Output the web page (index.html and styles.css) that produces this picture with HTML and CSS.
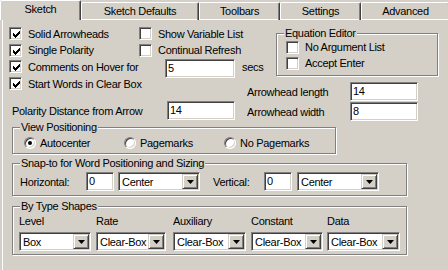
FILE: index.html
```html
<!DOCTYPE html>
<html>
<head>
<meta charset="utf-8">
<title>Sketch options</title>
<link rel="stylesheet" href="styles.css">
</head>
<body>
<div class="tabs">
  <div class="tab sel t1">Sketch</div>
  <div class="tab t2">Sketch Defaults</div>
  <div class="tab t3">Toolbars</div>
  <div class="tab t3">Settings</div>
  <div class="tab t5">Advanced</div>
</div>
<div class="panel">
  <div class="rowA">
    <div class="leftA">
      <div class="line">
        <div class="cb w130"><span class="box"><svg class="chk" width="7" height="7" viewBox="0 0 7 7"><path d="M0 2h1v3H0zM1 3h1v3H1zM2 4h1v3H2zM3 3h1v3H3zM4 2h1v3H4zM5 1h1v3H5zM6 0h1v3H6z"/></svg></span>Solid Arrowheads</div>
        <div class="cb"><span class="box"></span>Show Variable List</div>
      </div>
      <div class="line l2">
        <div class="cb w130"><span class="box"><svg class="chk" width="7" height="7" viewBox="0 0 7 7"><path d="M0 2h1v3H0zM1 3h1v3H1zM2 4h1v3H2zM3 3h1v3H3zM4 2h1v3H4zM5 1h1v3H5zM6 0h1v3H6z"/></svg></span>Single Polarity</div>
        <div class="cb"><span class="box"></span>Continual Refresh</div>
      </div>
      <div class="line">
        <div class="cb w156"><span class="box"><svg class="chk" width="7" height="7" viewBox="0 0 7 7"><path d="M0 2h1v3H0zM1 3h1v3H1zM2 4h1v3H2zM3 3h1v3H3zM4 2h1v3H4zM5 1h1v3H5zM6 0h1v3H6z"/></svg></span>Comments on Hover for</div>
        <div class="edit w70 low">5</div>
        <div class="secs">secs</div>
      </div>
    </div>
    <div class="group eq">
      <div class="gtitle">Equation Editor</div>
      <div class="eqrows">
        <div class="line eqline"><div class="cb"><span class="box"></span>No Argument List</div></div>
        <div class="line eqline"><div class="cb"><span class="box"></span>Accept Enter</div></div>
      </div>
    </div>
  </div>
  <div class="rowB">
    <div class="leftB">
      <div class="line">
        <div class="cb"><span class="box"><svg class="chk" width="7" height="7" viewBox="0 0 7 7"><path d="M0 2h1v3H0zM1 3h1v3H1zM2 4h1v3H2zM3 3h1v3H3zM4 2h1v3H4zM5 1h1v3H5zM6 0h1v3H6z"/></svg></span>Start Words in Clear Box</div>
      </div>
      <div class="polar">
        <div class="plbl">Polarity Distance from Arrow</div>
        <div class="edit w68">14</div>
      </div>
    </div>
    <div class="rightB">
      <div class="arow a1"><div class="albl">Arrowhead length</div><div class="edit w68">14</div></div>
      <div class="arow a2"><div class="albl">Arrowhead width</div><div class="edit w68">8</div></div>
    </div>
  </div>

  <div class="group view">
    <div class="gtitle">View Positioning</div>
    <div class="radios">
      <div class="ritem"><span class="radio on"></span>Autocenter</div>
      <div class="ritem"><span class="radio"></span>Pagemarks</div>
      <div class="ritem"><span class="radio"></span>No Pagemarks</div>
    </div>
  </div>

  <div class="group snap">
    <div class="gtitle">Snap-to for Word Positioning and Sizing</div>
    <div class="snaprow">
      <div class="lblH">Horizontal:</div>
      <div class="edit w28">0</div>
      <div class="combo c82 ml4"><span>Center</span><span class="btn"><svg width="7" height="4" viewBox="0 0 7 4"><path d="M0 0h7L3.5 4z"/></svg></span></div>
      <div class="lblV">Vertical:</div>
      <div class="edit w28">0</div>
      <div class="combo c82 ml5"><span>Center</span><span class="btn"><svg width="7" height="4" viewBox="0 0 7 4"><path d="M0 0h7L3.5 4z"/></svg></span></div>
    </div>
  </div>

  <div class="group shapes">
    <div class="gtitle">By Type Shapes</div>
    <div class="shaperow">
      <div class="scol s1"><div class="slbl">Level</div><div class="combo" style="width:72px"><span>Box</span><span class="btn"><svg width="7" height="4" viewBox="0 0 7 4"><path d="M0 0h7L3.5 4z"/></svg></span></div></div>
      <div class="scol s2"><div class="slbl">Rate</div><div class="combo" style="width:70px"><span>Clear-Box</span><span class="btn"><svg width="7" height="4" viewBox="0 0 7 4"><path d="M0 0h7L3.5 4z"/></svg></span></div></div>
      <div class="scol s3"><div class="slbl">Auxiliary</div><div class="combo" style="width:73px"><span>Clear-Box</span><span class="btn"><svg width="7" height="4" viewBox="0 0 7 4"><path d="M0 0h7L3.5 4z"/></svg></span></div></div>
      <div class="scol s4"><div class="slbl">Constant</div><div class="combo" style="width:72px"><span>Clear-Box</span><span class="btn"><svg width="7" height="4" viewBox="0 0 7 4"><path d="M0 0h7L3.5 4z"/></svg></span></div></div>
      <div class="scol s5"><div class="slbl">Data</div><div class="combo" style="width:73px"><span>Clear-Box</span><span class="btn"><svg width="7" height="4" viewBox="0 0 7 4"><path d="M0 0h7L3.5 4z"/></svg></span></div></div>
    </div>
  </div>
</div>
</body>
</html>
```

FILE: styles.css
```css
* { box-sizing: border-box; }
html, body { margin: 0; padding: 0; }
body {
  width: 448px;
  height: 270px;
  overflow: hidden;
  background: #d4d0c8;
  font-family: "Liberation Sans", Arial, sans-serif;
  font-size: 11px;
  letter-spacing: -0.3px;
  color: #000;
}

/* tabs */
.tabs { display: flex; height: 20px; }
.tab {
  flex: none;
  height: 18px;
  margin-top: 2px;
  border: 1px solid #fff;
  border-right-color: #404040;
  border-bottom: 0;
  border-radius: 2px 2px 0 0;
  box-shadow: inset -1px 0 #808080;
  text-align: center;
  line-height: 16px;
  white-space: nowrap;
  overflow: hidden;
}
.tab.sel {
  height: 20px;
  margin-top: 0;
  line-height: 17px;
  position: relative;
  z-index: 1;
  background: #d4d0c8;
}
.t1 { width: 81px; }
.t2 { width: 118px; }
.t3 { width: 81px; }
.t5 { width: 89px; }

/* panel */
.panel {
  margin-top: -1px;
  margin-left: 2px;
  width: 460px;
  height: 260px;
  border-top: 1px solid #fff;
  border-left: 1px solid #fff;
  padding: 5px 0 0 6px;
}

/* generic controls */
.line { display: flex; align-items: center; height: 17px; }
.line.l2 { height: 16px; }
.cb { display: flex; align-items: center; white-space: nowrap; }
.w130 { width: 130px; }
.w156 { width: 156px; }

.box {
  flex: none;
  width: 13px;
  height: 13px;
  margin-right: 6px;
  padding: 2px;
  border: 1px solid;
  border-color: #808080 #fff #fff #808080;
  box-shadow: inset 1px 1px #404040, inset -1px -1px #d4d0c8;
  background: #fff;
}
.chk { display: block; margin: 1px; shape-rendering: crispEdges; }

.edit {
  flex: none;
  height: 19px;
  border: 1px solid;
  border-color: #808080 #fff #fff #808080;
  box-shadow: inset 1px 1px #404040, inset -1px -1px #d4d0c8;
  background: #fff;
  padding: 0 2px;
  line-height: 17px;
  white-space: nowrap;
}
.w70 { width: 70px; }
.w68 { width: 68px; }
.w28 { width: 28px; }
.edit.low { align-self: flex-start; margin-top: 1px; }
.secs { margin-left: 7px; }

.combo {
  flex: none;
  display: flex;
  align-items: center;
  justify-content: space-between;
  height: 19px;
  border: 1px solid;
  border-color: #808080 #fff #fff #808080;
  box-shadow: inset 1px 1px #404040, inset -1px -1px #d4d0c8;
  background: #fff;
  padding: 1px 1px 1px 3px;
  white-space: nowrap;
}
.combo .btn {
  flex: none;
  width: 16px;
  height: 15px;
  display: flex;
  align-items: center;
  justify-content: center;
  background: #d4d0c8;
  border: 1px solid;
  border-color: #d4d0c8 #404040 #404040 #d4d0c8;
  box-shadow: inset 1px 1px #fff, inset -1px -1px #808080;
}
.combo .btn svg { display: block; }
.c82 { width: 82px; }
.ml4 { margin-left: 4px; }
.ml5 { margin-left: 5px; }

.radio {
  flex: none;
  width: 12px;
  height: 12px;
  margin-right: 4px;
  border-radius: 50%;
  border: 1px solid;
  border-color: #808080 #fff #fff #808080;
  box-shadow: inset 1px 1px #404040, inset -1px -1px #d4d0c8;
  background: #fff;
  display: flex;
  align-items: center;
  justify-content: center;
}
.radio.on::after {
  content: "";
  width: 4px;
  height: 4px;
  border-radius: 50%;
  background: #000;
}

/* group boxes */
.group {
  border: 1px solid #808080;
  box-shadow: inset 1px 1px #fff, 1px 1px #fff;
}
.gtitle {
  display: table;
  height: 13px;
  margin: -7px 0 0 7px;
  padding: 0 1px;
  line-height: 13px;
  background: #d4d0c8;
  white-space: nowrap;
}

/* row A */
.rowA { display: flex; height: 50px; }
.leftA { width: 267px; flex: none; }
.eq { flex: none; width: 162px; height: 43px; margin-top: 8px; }
.eqrows { margin-top: -1px; }
.eqline { height: 16px; padding-left: 9px; }

/* row B */
.rowB { display: flex; height: 46px; }
.leftB { width: 238px; flex: none; }
.polar { display: flex; align-items: center; height: 19px; margin-top: 9px; padding-left: 3px; }
.plbl { width: 155px; white-space: nowrap; }
.arow { display: flex; align-items: center; height: 19px; }
.a1 { margin-top: 7px; }
.a2 { margin-top: 1px; }
.albl { width: 103px; white-space: nowrap; }

/* view positioning */
.view { width: 324px; height: 27px; margin: 6px 0 0 3px; }
.radios { display: flex; align-items: center; height: 17px; padding-left: 11px; }
.ritem { display: flex; align-items: center; width: 100px; white-space: nowrap; }

/* snap-to */
.snap { width: 395px; height: 33px; margin: 9px 0 0 3px; }
.snaprow { display: flex; align-items: center; height: 19px; margin-top: 2px; padding-left: 7px; }
.lblH { width: 66px; white-space: nowrap; }
.lblV { width: 51px; margin-left: 13px; white-space: nowrap; }

/* by type shapes */
.shapes { width: 395px; height: 49px; margin: 10px 0 0 3px; }
.shaperow { display: flex; padding-left: 6px; }
.scol { flex: none; }
.s1 { width: 77px; }
.s2 { width: 77px; }
.s3 { width: 78px; }
.s4 { width: 76px; }
.s5 { width: 73px; }
.slbl { height: 16px; line-height: 16px; white-space: nowrap; }
.scol .combo { margin-top: 3px; }
```
